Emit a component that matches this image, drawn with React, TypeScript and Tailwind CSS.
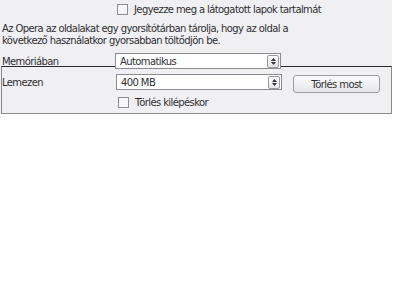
import React from 'react';

const font = { fontFamily: '"DejaVu Sans", Verdana, sans-serif' };

function Checkbox({ label }: { label: string }) {
    return (
        <div className="flex items-center gap-[6px]">
            <span className="w-[11px] h-[11px] border border-[#8e8f93] bg-[#f7f7f8] shrink-0" />
            <span>{label}</span>
        </div>
    );
}

function Spinner() {
    return (
        <div className="w-[12px] h-[13px] border border-[#9a9ba0] rounded-[2px] bg-gradient-to-b from-[#fdfdfd] to-[#e6e6e8] flex flex-col items-center justify-center gap-[1px]">
            <svg width="5" height="3" viewBox="0 0 5 3"><path d="M0 3 L2.5 0 L5 3 Z" fill="#333" /></svg>
            <svg width="5" height="3" viewBox="0 0 5 3"><path d="M0 0 L2.5 3 L5 0 Z" fill="#333" /></svg>
        </div>
    );
}

function Select({ value }: { value: string }) {
    return (
        <div className="relative z-10 w-[166px] h-[16px] bg-white border border-[#8c8d92] flex items-center justify-between pl-[4px] pr-[1px] shrink-0">
            <span>{value}</span>
            <Spinner />
        </div>
    );
}

export default function App() {
    return (
        <div className="w-[400px] h-[300px] bg-white text-[#2f2f33] text-[10px] leading-[11px] tracking-[-0.6px]" style={font}>
            <div className="w-[392px] bg-[#f0f0f2]">
                <div className="pl-[117px] pt-[4px]">
                    <Checkbox label="Jegyezze meg a látogatott lapok tartalmát" />
                </div>

                {/* cache description */}
                <p className="pl-[2px] pt-[8px] leading-[12px]">
                    Az Opera az oldalakat egy gyorsítótárban tárolja, hogy az oldal a<br />
                    következő használatkor gyorsabban töltődjön be.
                </p>

                <div className="flex items-center pt-[6px]">
                    <span className="w-[115px] pl-[2px]">Memóriában</span>
                    <Select value="Automatikus" />
                </div>

                <div className="-mt-[3px] ml-[1px] border-t border-t-[#2a2a2c] border-l border-r border-b border-[#8a8a8e] pb-[5px]">
                    <div className="flex items-start pt-[7px]">
                        <span className="w-[114px] pt-[3px]">Lemezen</span>
                        <Select value="400 MB" />
                        <button className="ml-[11px] mt-[1px] w-[87px] h-[18px] rounded-[3px] border border-[#9c9da1] bg-gradient-to-b from-[#fbfbfb] to-[#e7e7e9] text-[#2f2f33]">
                            Törlés most
                        </button>
                    </div>
                    <div className="pl-[116px] pt-[4px]">
                        <Checkbox label="Törlés kilépéskor" />
                    </div>
                </div>
            </div>
        </div>
    );
}
